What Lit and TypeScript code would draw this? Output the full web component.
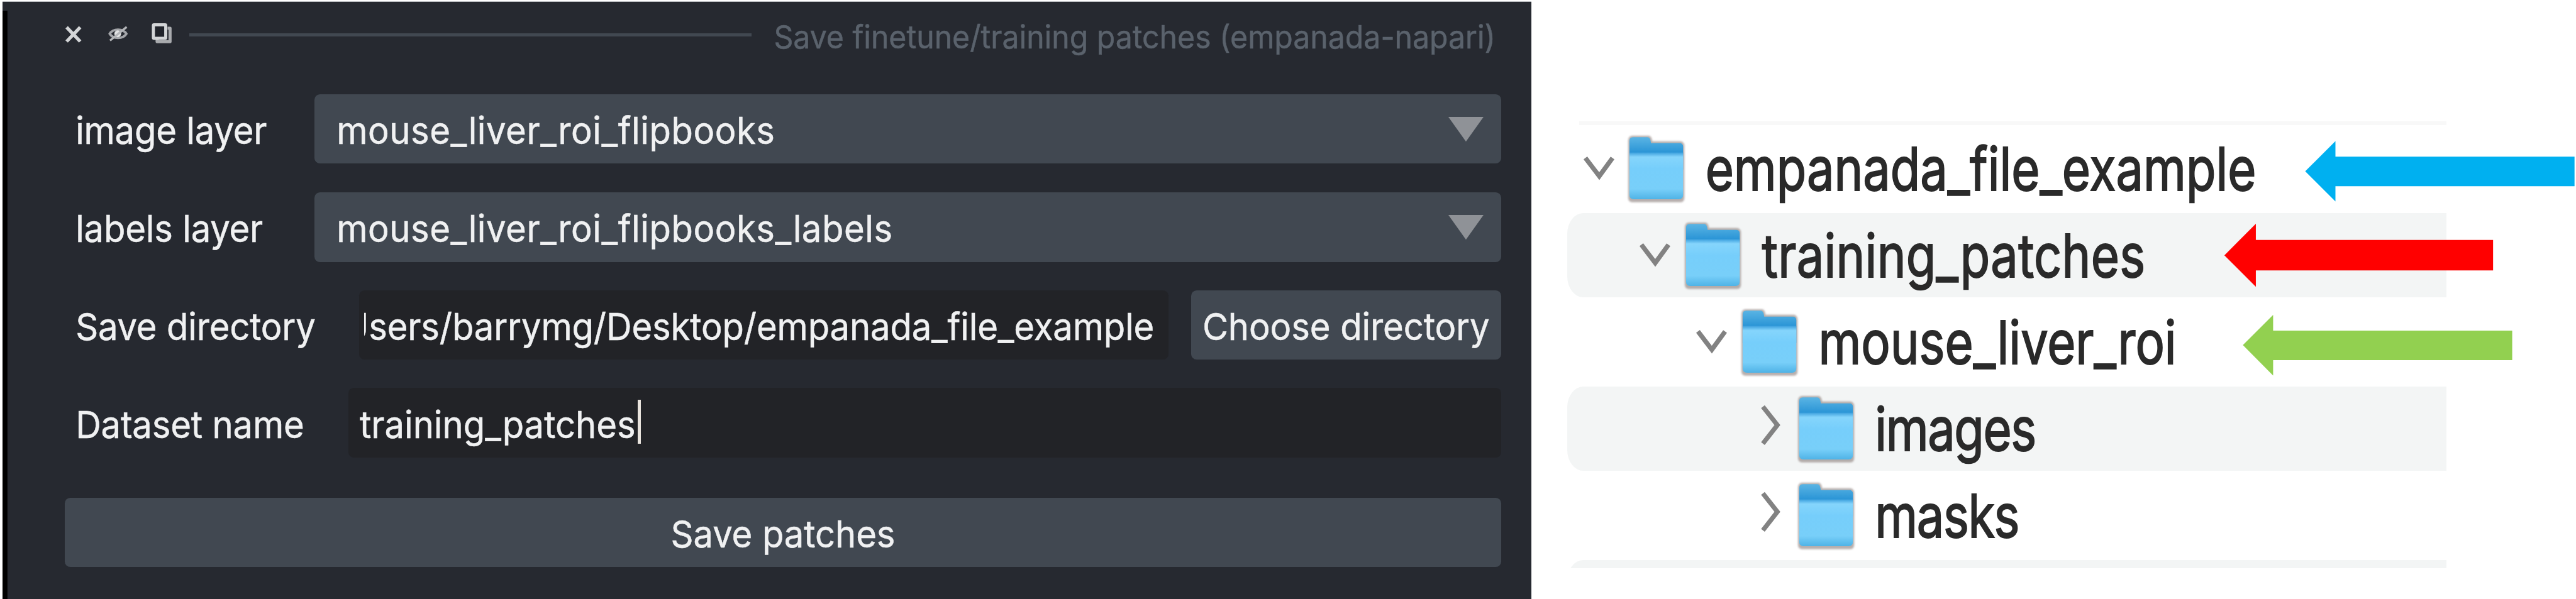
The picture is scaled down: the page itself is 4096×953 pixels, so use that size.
import { LitElement, html, svg, css } from "lit";
import { classMap } from "lit/directives/class-map.js";

const base = css`
  :host { display: block; }
  * { box-sizing: border-box; }
  svg { display: block; flex: none; }
`;

class NapariPanel extends LitElement {
  static styles = [base, css`
    .panel {
      width: 2478px; height: 970px; margin: 2px 0 0 4px;
      padding: 27px 49px 0 101px;
      border-top: 1px solid #b9bbbf;
      background: linear-gradient(#000, #000) 0 14px / 8px 100% no-repeat, #262930;
      color: #f0f1f2;
      font: 57.3px/1.21 Inter, "Liberation Sans", sans-serif;
      white-space: nowrap;
      -webkit-text-stroke: 0.5px currentColor;
    }
    .t { display: inline-block; transform: translateY(2.6px) scaleY(1.06); }
    .header { display: flex; align-items: center; height: 54px; margin-bottom: 68.7px; padding-right: 9px; }
    .close { margin-top: -3px; }
    .eye { margin: -5px 0 0 42px; }
    .float { margin: -5px 0 0 38px; }
    .rule { flex: 1; height: 5px; margin: 0 36px 0 26.7px; background: #414851; }
    .title { font-size: 49.1px; color: #5a626c; transform: translateY(3.2px) scaleY(1.06); }
    .row { display: flex; align-items: center; padding-left: 17.5px; }
    .row.combo { height: 112.8px; margin-bottom: 46.3px; }
    .row.dir { height: 112.4px; margin-bottom: 46px; }
    .row.name { height: 113.1px; margin-bottom: 65.4px; }
    .label { width: 387.5px; flex: none; letter-spacing: -0.2px; }
    .select, .input, .button { display: flex; align-items: center; height: 100%; border-radius: 9px; }
    .select { flex: 1; justify-content: space-between; padding: 0 29px 0 35.5px; background: #414851; }
    .select .t { letter-spacing: 0.58px; }
    .arrow { margin-top: 1px; }
    .input { flex: 1; min-width: 0; background: #222327; }
    .dir .input { margin-left: 72px; padding: 0 23.5px 0 8.5px; }
    .clip { flex: 1; min-width: 0; height: 100%; display: flex; align-items: center; justify-content: flex-end; overflow: hidden; }
    .clip .t { flex: none; letter-spacing: -0.14px; }
    .name .input { margin-left: 54.5px; padding-left: 18.5px; }
    .caret { width: 5px; height: 72px; margin: -4px 0 0 3px; background: #e9e4de; }
    .button { flex: none; justify-content: center; background: #414851; letter-spacing: -0.1px; }
    .dir .button { width: 503px; margin-left: 36px; }
    .panel .save { height: 112.1px; }
  `];

  combo(label: string, value: string) {
    return html`<div class="row combo">
      <div class="label"><span class="t">${label}</span></div>
      <div class="select">
        <span class="t">${value}</span>
        <svg class="arrow" width="57" height="40" viewBox="0 0 57 40"><path d="M0 0H57L28.5 40Z" fill="#8f9297" /></svg>
      </div>
    </div>`;
  }

  render() {
    return html`<div class="panel">
      <div class="header">
        <svg class="close" width="28" height="30" viewBox="0 0 28 30"><path d="M3 3.5L25 26.5M25 3.5L3 26.5" stroke="#d3d5d7" stroke-width="5.5" /></svg>
        <svg class="eye" width="32" height="28" viewBox="0 0 32 28">
          <path d="M2.5 14C8 5 24 5 29.5 14C24 23 8 23 2.5 14Z" fill="none" stroke="#a3a5a9" stroke-width="4" />
          <circle cx="15.5" cy="14" r="5.5" fill="#e3e4e5" />
          <path d="M3 25L30 3" stroke="#b4b6b9" stroke-width="3.5" />
        </svg>
        <svg class="float" width="35" height="35" viewBox="0 0 35 35">
          <path d="M27 9H31V31H10V27" fill="none" stroke="#a9abae" stroke-width="5" stroke-linejoin="round" />
          <rect x="4" y="3.5" width="20" height="22" rx="1" fill="#20232a" stroke="#d3d5d7" stroke-width="5" />
        </svg>
        <div class="rule"></div>
        <span class="t title">Save finetune/training patches (empanada-napari)</span>
      </div>
      ${this.combo("image layer", "mouse_liver_roi_flipbooks")}
      ${this.combo("labels layer", "mouse_liver_roi_flipbooks_labels")}
      <div class="row dir">
        <div class="label"><span class="t">Save directory</span></div>
        <div class="input"><div class="clip"><span class="t">/Users/barrymg/Desktop/empanada_file_example</span></div></div>
        <div class="button"><span class="t">Choose directory</span></div>
      </div>
      <div class="row name">
        <div class="label"><span class="t">Dataset name</span></div>
        <div class="input"><span class="t">training_patches</span><div class="caret"></div></div>
      </div>
      <div class="button save"><span class="t">Save patches</span></div>
    </div>`;
  }
}
customElements.define("napari-panel", NapariPanel);

interface Entry { name: string; level: number; open: boolean; }

const ENTRIES: Entry[] = [
  { name: "empanada_file_example", level: 0, open: true },
  { name: "training_patches", level: 1, open: true },
  { name: "mouse_liver_roi", level: 2, open: true },
  { name: "images", level: 3, open: false },
  { name: "masks", level: 3, open: false },
];

class FinderTree extends LitElement {
  static styles = [base, css`
    .tree {
      width: 1425px; height: 724.7px; margin: 197px 0 0 58px; overflow: hidden;
      color: #2a2a2a; font: 79px/1.21 Inter, "Liberation Sans", sans-serif; white-space: nowrap;
      -webkit-text-stroke: 1.6px currentColor;
    }
    .line { height: 6px; margin: 0 0 1.4px 19px; background: #f8f8f8; }
    .row { display: flex; align-items: center; height: 137px; margin-bottom: 3.8px; padding-left: 22px; border-radius: 26px 0 0 26px / 34px 0 0 34px; }
    .alt { background: #f3f5f5; }
    .indent { flex: none; }
    .folder { margin: 0 31px 0 14px; }
    .right { margin-top: -12px; }
    .name { display: inline-block; transform: translateY(1.5px) scaleY(1.23); }
    .mid { letter-spacing: 0.3px; }
    .leaf { letter-spacing: -1.4px; }
  `];

  row(e: Entry, i: number) {
    return html`<div class=${classMap({ row: true, alt: i % 2 === 1 })}>
      <div class="indent" style="width:${e.level * 91.6}px"></div>
      ${e.open
        ? html`<svg width="60" height="50" viewBox="0 0 60 50"><path d="M7 8.5L29.5 38L51 8.5" fill="none" stroke="#828282" stroke-width="7.5" /></svg>`
        : html`<svg class="right" width="60" height="70" viewBox="0 0 60 70"><path d="M20.5 5L44 35L20.5 65" fill="none" stroke="#828282" stroke-width="7.5" /></svg>`}
      <svg class="folder" width="97" height="116" viewBox="0 0 97 116">
        <defs>
          <linearGradient id="back" x1="0" y1="0" x2="0" y2="1"><stop offset="0" stop-color="#5ab4e4" /><stop offset=".6" stop-color="#1d8cd2" /><stop offset="1" stop-color="#3b9fdd" /></linearGradient>
          <linearGradient id="front" x1="0" y1="0" x2="0" y2="1"><stop offset="0" stop-color="#3b9fdd" /><stop offset=".1" stop-color="#85d5fc" /><stop offset=".35" stop-color="#76cefb" /><stop offset=".78" stop-color="#78cff9" /><stop offset="1" stop-color="#4fb3e6" /></linearGradient>
          <filter id="soft" x="-10%" y="-10%" width="120%" height="120%"><feGaussianBlur stdDeviation="1.6" /></filter>
        </defs>
        <path d="M3 14Q3 5 10 5H36Q41 5 42 14H88Q94 15 94 22V106Q94 113 87 113H11Q3 113 3 106Z" fill="#8c7f7c" opacity=".62" filter="url(#soft)" />
        <path d="M5 14Q5 7.5 11 7.5H34Q39 7.5 40 17H86Q92 17 92 23V60H5Z" fill="url(#back)" />
        <path d="M5 32H92V101Q92 108 85 108H12Q5 108 5 101Z" fill="url(#front)" />
      </svg>
      <span class=${classMap({ name: true, mid: e.level === 1, leaf: e.level === 3 })}>${e.name}</span>
    </div>`;
  }

  render() {
    return html`<div class="tree">
      <div class="line"></div>
      ${ENTRIES.map((e, i) => this.row(e, i))}
      <div class="row alt"></div>
    </div>`;
  }
}
customElements.define("finder-tree", FinderTree);

class AppRoot extends LitElement {
  static styles = [base, css`
    :host { width: 4096px; height: 953px; overflow: hidden; background: #fff; }
    .stage { position: relative; display: flex; align-items: flex-start; width: 4175px; height: 972px; zoom: 0.98108; }
    .arrows { position: absolute; left: 3600px; top: 220px; }
  `];

  render() {
    return html`<div class="stage">
      <napari-panel></napari-panel>
      <finder-tree></finder-tree>
      <svg class="arrows" width="575" height="400" viewBox="3600 220 575 400">
        ${svg`
          <path d="M3736 277.7L3785 228.7V254H4172.5V301.8H3785V326.5Z" fill="#00b0f0" />
          <path d="M3605 413.8L3656 362.7V389H4040.5V438.5H3656V465Z" fill="#ff0000" />
          <path d="M3635 559.5L3684 510.5V536H4071.5V583.8H3684V608.8Z" fill="#92d050" />
        `}
      </svg>
    </div>`;
  }
}
customElements.define("app-root", AppRoot);
